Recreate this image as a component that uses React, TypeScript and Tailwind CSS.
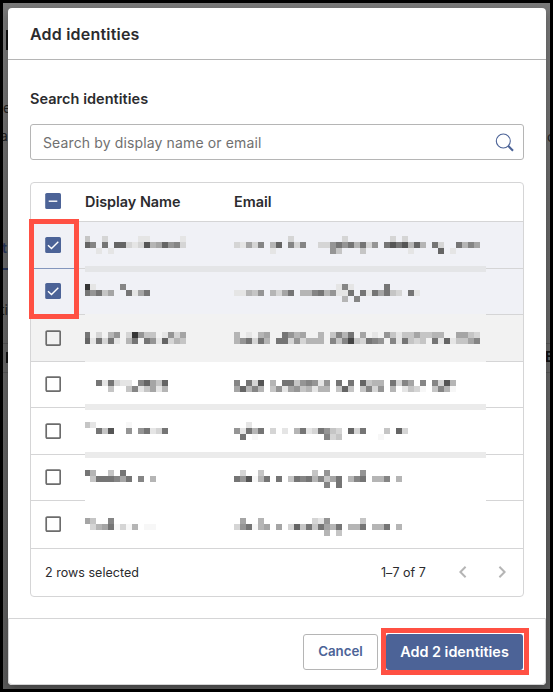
import React from "react";

const CELL = 6;

// Each strip: [y, first column, grey levels]; "." leaves the cell empty.
const strips: [number, number, string][] = [
  [236, 0, "c..d.....ee.....e"],
  [242, 0, "68.7.66ded5ba698d"],
  [248, 0, "..e.e"],
  [236, 25, ".........d........d.......d.d"],
  [242, 25, "dead8.b6.8d8..dd9797b7d9.7575b6b.7d..7b8a"],
  [248, 25, "......e.........9c...c.......e....6.e"],
  [284, 0, "3e....8"],
  [290, 0, "797ca..7ea7"],
  [284, 25, ".................e8e.....7"],
  [290, 25, "eebc9.bda7.bb87b9ee7.7e7a7cd.7e"],
  [296, 25, "..................b.8"],
  [332, 0, "7.d.b9.d39cc.e9da"],
  [338, 0, "6e7d7e.b7.79e6dbc"],
  [332, 25, "b.e.ba..79ba..b.c8b7.a.e.9ceccaccbb..aacd"],
  [338, 25, "b97d7b.77d9dbbb.8c84cd789.8e7cdc.7e6ecca8"],
  [380, 0, "..7e7dee.86ac6"],
  [386, 0, "....c..c8ecaeb"],
  [380, 25, "8.7d5.b.77c989e9.7.7.6cbb.7d8a.8.8d5b"],
  [386, 25, "a6b8b.c9ea9cbebb.c6c.c8d9.b.ecdf.c8bf"],
  [422, 0, "ce.....f"],
  [428, 0, "..7c5..9.97ed7"],
  [422, 25, "..e"],
  [428, 25, "9e7b7.d.e.b7ed79cd.6d7...c.6d"],
  [434, 25, ".7.f...........8dc......f"],
  [470, 0, "7b..c.7"],
  [476, 0, ".c7778a7.8.b"],
  [470, 25, ".d..c........c.9.....9"],
  [476, 25, "795fb7.7.c787b8ca7.b87.bb8.b"],
  [482, 25, "...............8.7"],
  [518, 0, "ac..8"],
  [524, 0, ".dba7fdfb.ff"],
  [518, 25, ".a..b........de9.....c"],
  [524, 25, "d97fba.a.d6c7c7ab7.bb7.bb7.b"],
  [530, 25, "...............b.c"],
];

const bands: [number, number, string][] = [
  [222, 44, "#f0f1f6"],
  [266, 6, "#e4e5e7"],
  [272, 42, "#f0f1f6"],
  [314, 48, "#f2f2f2"],
  [362, 42, "#ffffff"],
  [404, 6, "#ebebeb"],
  [410, 42, "#ffffff"],
  [452, 6, "#ebebeb"],
  [458, 80, "#ffffff"],
];

function Mosaic() {
  return (
    <svg
      className="absolute left-[54px] top-[39px]"
      width="401"
      height="316"
      viewBox="85 222 401 316"
      shapeRendering="crispEdges"
      aria-hidden="true"
    >
      {bands.map(([y, h, fill]) => (
        <rect key={y} x={85} y={y} width={401} height={h} fill={fill} />
      ))}
      {strips.flatMap(([y, start, levels]) =>
        levels.split("").map((c, i) =>
          c === "." ? null : (
            <rect
              key={`${y}-${start + i}`}
              x={84 + (start + i) * CELL}
              y={y}
              width={CELL}
              height={CELL}
              fill={c === "f" ? "#f7f7f7" : `#${c}5${c}5${c}5`}
            />
          ),
        ),
      )}
    </svg>
  );
}

function Check({ state }: { state: "on" | "off" | "some" }) {
  if (state === "off") {
    return (
      <svg width="16" height="16" viewBox="0 0 16 16" className="shrink-0">
        <rect x="1.2" y="1.1" width="14" height="14" rx="1" fill="none" stroke="#6c6c6c" strokeWidth="1.7" />
      </svg>
    );
  }
  return (
    <svg width="16" height="16" viewBox="0 0 16 16" className="shrink-0">
      <rect x="0.2" width="15.8" height="16" rx="1.6" fill="#4c6397" />
      <path
        d={state === "on" ? "M3 8.3 6.5 11.6 13.3 4.7" : "M3.7 8.2H12.3"}
        fill="none"
        stroke="#fff"
        strokeWidth="1.4"
      />
    </svg>
  );
}

const rows = [
  { on: true, cls: "h-[47px] bg-[#f0f1f6]" },
  { on: true, cls: "h-[46px] bg-[#f0f1f6] pb-px" },
  { on: false, cls: "h-[47px] bg-[#f2f2f2]" },
  { on: false, cls: "h-[46px] pb-px" },
  { on: false, cls: "h-[47px]" },
  { on: false, cls: "h-[46px] pb-px" },
  { on: false, cls: "h-[48px] pb-px" },
];

function Backdrop() {
  return (
    <div className="absolute inset-0 overflow-hidden bg-gradient-to-b from-[#7a7a7a] via-[#696969] via-30% to-[#5c5c5c] text-[14px] leading-none text-[#222]">
      <div className="absolute left-[3px] top-[27px] h-5 w-[2px] bg-[#111]" />
      <span className="absolute left-0 top-[98px]">e</span>
      <span className="absolute -left-[3px] top-[126px]">a</span>
      <span className="absolute -left-px top-[238px] font-semibold text-[#26355a]">t</span>
      <div className="absolute left-0 top-[265px] h-[2px] w-2 bg-[#26355a]" />
      <span className="absolute -left-[3px] top-[300px]">ti</span>
      <div className="absolute left-0 top-[340px] h-[30px] w-full border-y border-[#555]" />
      <div className="absolute left-[3px] top-[349px] h-[11px] w-[2px] bg-[#111]" />
      <span className="absolute left-[544px] top-[127px]">c</span>
      <span className="absolute left-[542px] top-[347px] font-bold text-[#111]">E</span>
    </div>
  );
}

export default function App() {
  return (
    <div className="relative h-[692px] w-[553px] overflow-hidden border-[3px] border-black font-['Inter',sans-serif] text-[#2b2b2e]">
      <Backdrop />
      <div className="relative ml-[5px] mt-[5px] flex h-[677px] w-[538px] flex-col rounded-[4px] bg-white shadow-[0_4px_10px_rgba(0,0,0,0.3)]">
        <header className="flex h-[52px] items-center border-b border-[#b5b5b5] px-[22px]">
          <h1 className="text-[16px] font-semibold tracking-[0.2px]">Add identities</h1>
        </header>

        <main className="flex h-[558px] flex-col px-[22px] pt-[28px]">
          <label className="h-9 text-[14.5px] font-semibold leading-[21px] tracking-[0.04px]">Search identities</label>
          <div className="flex h-9 shrink-0 items-center justify-between rounded-[3px] border border-[#b5b5b5] pl-3 pr-[9px]">
            <span className="pt-px text-[14px] tracking-[0.13px] text-[#707070]">Search by display name or email</span>
            <svg width="19" height="19" viewBox="0 0 19 19" fill="none" stroke="#4c6397">
              <circle cx="8.3" cy="8" r="7" strokeWidth="1.1" />
              <path d="M13.1 12.8 18 17.7" strokeWidth="2.1" />
            </svg>
          </div>

          <section className="relative mt-[22px] flex h-[415px] shrink-0 flex-col rounded-[4px] border border-[#d5d5d6]">
            <div className="flex h-[39px] shrink-0 items-center border-b border-[#d5d5d6] pl-[14px] text-[14.4px] font-semibold">
              <div className="pb-0.5">
                <Check state="some" />
              </div>
              <span className="ml-6 w-[149px]">Display Name</span>
              <span>Email</span>
            </div>
            {rows.map((row, i) => (
              <div key={i} className={`flex shrink-0 items-center border-b border-[#d5d5d6] pl-[14px] ${row.cls}`}>
                <Check state={row.on ? "on" : "off"} />
              </div>
            ))}
            <div className="flex flex-1 items-center pl-[14px] pr-[14px] text-[12.5px]">
              <span className="flex-1 pt-[2px] tracking-[0.03px]">2 rows selected</span>
              <span className="mr-[33px] pt-[2px] tracking-[0.05px]">1–7 of 7</span>
              <svg className="mb-[2px]" width="8" height="12" viewBox="0 0 8 12" fill="none" stroke="#b5b5b5" strokeWidth="2">
                <path d="M6.6 .8 1.4 6 6.6 11.2" />
              </svg>
              <svg className="mb-[2px] ml-[31px] mr-[3px]" width="8" height="12" viewBox="0 0 8 12" fill="none" stroke="#b5b5b5" strokeWidth="2">
                <path d="M1.4 .8 6.6 6 1.4 11.2" />
              </svg>
            </div>
            <Mosaic />
            <div className="absolute left-0 top-[85px] h-px w-12 bg-[#8496bd]" />
            <div className="absolute -left-[2px] top-[36px] h-[100px] w-[50px] border-[5px] border-[#ff5043]" />
          </section>
        </main>

        <footer className="flex flex-1 items-start justify-end gap-2 rounded-b-[4px] border border-[#d5d5d6] pr-[22px] pt-[15px]">
          <button className="h-9 w-[75px] rounded-[3px] border border-[#b5b5b5] text-[13.3px] font-semibold text-[#4c6397]">
            Cancel
          </button>
          <div className="relative">
            <button className="h-9 w-[137px] rounded-[3px] bg-[#4c6397] text-[14.4px] font-semibold text-white">
              Add 2 identities
            </button>
            <div className="absolute -left-[5px] -top-[6px] h-[47px] w-[148px] border-[5px] border-[#ff5043]" />
          </div>
        </footer>
      </div>
    </div>
  );
}
